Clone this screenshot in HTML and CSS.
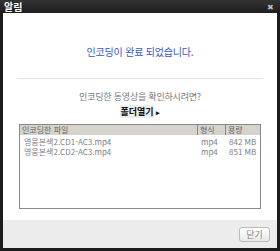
FILE: index.html
```html
<!DOCTYPE html>
<html lang="ko">
<head>
    <meta charset="UTF-8">
    <title>알림</title>
    <link rel="stylesheet" href="styles.css">
</head>
<body>
    <div class="window">
        <div class="titlebar">
            <span class="title">알림</span>
            <span class="close">&#x2716;</span>
        </div>
        <div class="content">
            <p class="done">인코딩이 완료 되었습니다.</p>
            <div class="divider"></div>
            <p class="question">인코딩한 동영상을 확인하시려면?</p>
            <p class="folder"><span class="folder-link">폴더열기</span><span class="arrow">&#x25B8;</span></p>
            <div class="list">
                <div class="list-head">
                    <span class="col-name">인코딩한 파일</span>
                    <span class="col-type">형식</span>
                    <span class="col-size">용량</span>
                </div>
                <div class="list-body">
                    <div class="list-row">
                        <span class="col-name">영웅본색2.CD1-AC3.mp4</span>
                        <span class="col-type">mp4</span>
                        <span class="col-size">842 MB</span>
                    </div>
                    <div class="list-row">
                        <span class="col-name">영웅본색2.CD2-AC3.mp4</span>
                        <span class="col-type">mp4</span>
                        <span class="col-size">851 MB</span>
                    </div>
                </div>
            </div>
        </div>
        <div class="footer">
            <button class="close-btn">닫기</button>
        </div>
    </div>
</body>
</html>
```

FILE: styles.css
```css
body {
    margin: 0;
    padding: 0;
    background: #fff;
    font-family: "Noto Sans CJK KR", "Noto Sans", sans-serif;
    font-size: 9px;
}

p {
    margin: 0;
}

.window {
    width: 280px;
    height: 251px;
    box-sizing: border-box;
    background: linear-gradient(#333, #1c1c1c 14px, #1c1c1c);
    padding: 0 3px 3px 3px;
    display: flex;
    flex-direction: column;
}

.titlebar {
    height: 13px;
    display: flex;
    justify-content: space-between;
    align-items: center;
    padding: 0 3px 0 1px;
}

.title {
    color: #fff;
    font-weight: bold;
    font-size: 10px;
    line-height: 13px;
}

.close {
    color: #bbb;
    font-size: 8px;
    line-height: 13px;
}

.content {
    background: #fff;
    height: 207px;
    display: flex;
    flex-direction: column;
    align-items: center;
}

.done {
    color: #3a55c8;
    font-size: 10px;
    margin-top: 32px;
    line-height: 14px;
    letter-spacing: -0.2px;
}

.divider {
    width: 246px;
    height: 1px;
    background: #e4e4e4;
    margin-top: 19px;
}

.question {
    color: #777;
    margin-top: 12px;
    line-height: 12px;
    letter-spacing: -0.2px;
}

.folder {
    color: #111;
    font-weight: bold;
    margin-top: 3px;
    line-height: 12px;
}

.folder-link {
    background: #ececec;
}

.arrow {
    font-size: 7px;
    margin-left: 2px;
}

.list {
    width: 242px;
    height: 85px;
    box-sizing: border-box;
    border: 1px solid #888;
    margin-top: 6px;
    color: #808080;
    font-size: 8px;
    white-space: nowrap;
}

.list-head {
    display: flex;
    height: 10px;
    background: #d6d3cc;
    line-height: 10px;
    color: #666;
    overflow: hidden;
}

.list-head span {
    border-right: 1px solid #888;
    box-sizing: border-box;
    padding-left: 2px;
}

.list-head .col-size {
    border-right: none;
}

.list-body {
    padding-top: 2px;
}

.list-row {
    display: flex;
    line-height: 10px;
    height: 10px;
}

.list-row .col-name {
    padding-left: 4px;
}

.col-name {
    width: 178px;
    box-sizing: border-box;
}

.col-type {
    width: 28px;
}

.col-size {
    width: 34px;
}

.list-row .col-type,
.list-row .col-size {
    padding-left: 3px;
    box-sizing: border-box;
}

.footer {
    flex: 1;
    background: #ececec;
    display: flex;
    justify-content: flex-end;
    align-items: center;
    padding-right: 7px;
}

.close-btn {
    width: 31px;
    height: 15px;
    padding: 0;
    border: 1px solid #bbb;
    border-radius: 3px;
    background: linear-gradient(#fdfdfd, #e9e9e9);
    color: #888;
    font-family: inherit;
    font-size: 9px;
    line-height: 13px;
}
```
